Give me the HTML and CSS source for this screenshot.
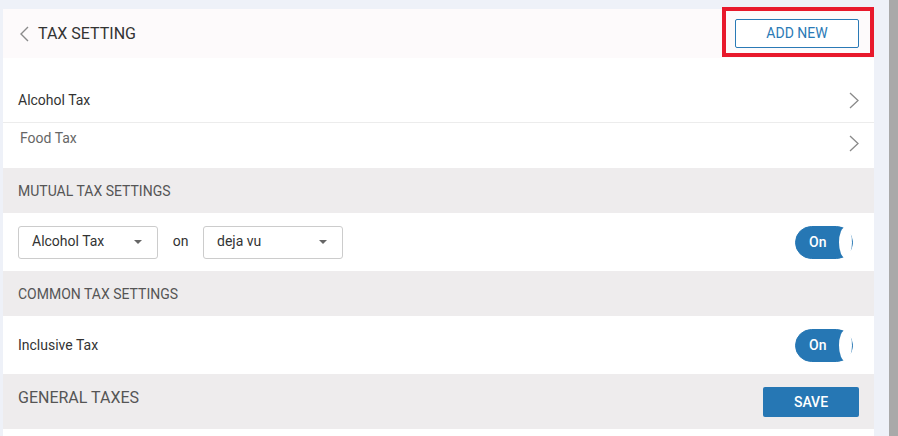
FILE: index.html
```html
<!DOCTYPE html>
<html lang="en">
<head>
    <meta charset="UTF-8">
    <meta name="viewport" content="width=device-width, initial-scale=1.0">
    <title>Tax Setting</title>
    <link rel="stylesheet" href="styles.css">
</head>
<body>
    <div class="screen">
        <div class="panel">
            <div class="header">
                <div class="title">
                    <svg class="back" width="10" height="16" viewBox="0 0 10 16"><path d="M9 1 L2 8 L9 15" fill="none" stroke="#8a8a8a" stroke-width="1.4"/></svg>
                    <span>TAX SETTING</span>
                </div>
                <button class="btn-outline">ADD NEW</button>
                <div class="highlight"></div>
            </div>

            <div class="tax-item first">
                <span>Alcohol Tax</span>
                <svg class="chev" width="10" height="17" viewBox="0 0 10 17"><path d="M1 1 L9 8.5 L1 16" fill="none" stroke="#8a8a8a" stroke-width="1.3"/></svg>
            </div>
            <div class="tax-item second">
                <span class="muted">Food Tax</span>
                <svg class="chev" width="10" height="17" viewBox="0 0 10 17"><path d="M1 1 L9 8.5 L1 16" fill="none" stroke="#8a8a8a" stroke-width="1.3"/></svg>
            </div>

            <div class="section">MUTUAL TAX SETTINGS</div>
            <div class="row">
                <div class="selects">
                    <div class="select"><span>Alcohol Tax</span><i class="caret"></i></div>
                    <span class="on-label">on</span>
                    <div class="select"><span>deja vu</span><i class="caret"></i></div>
                </div>
                <div class="toggle"><span>On</span><i class="knob"></i></div>
            </div>

            <div class="section">COMMON TAX SETTINGS</div>
            <div class="row">
                <span>Inclusive Tax</span>
                <div class="toggle"><span>On</span><i class="knob"></i></div>
            </div>

            <div class="section big">
                <span>GENERAL TAXES</span>
                <button class="btn-solid">SAVE</button>
            </div>
        </div>
        <div class="scrollbar"></div>
    </div>
</body>
</html>
```

FILE: styles.css
```css
body {
    margin: 0;
    background-color: #eef1f8;
    font-family: Roboto, "Liberation Sans", Arial, sans-serif;
    color: #333;
}
.screen {
    display: flex;
    height: 436px;
}
.panel {
    width: 871px;
    margin: 9px 0 0 3px;
    background-color: #fff;
    font-size: 14px;
}
.scrollbar {
    width: 9px;
    margin-left: auto;
    background-color: #a9a9a9;
}
.header {
    position: relative;
    height: 49px;
    display: flex;
    align-items: center;
    justify-content: space-between;
    padding: 0 15px 0 15px;
    background-color: #fdfafb;
}
.title {
    display: flex;
    align-items: center;
    gap: 9px;
    font-size: 16px;
    color: #333;
}
.back {
    margin-left: 1px;
}
.btn-outline {
    width: 124px;
    height: 29px;
    margin-top: -1px;
    background: #fff;
    border: 1px solid #2a7ab6;
    border-radius: 2px;
    color: #2a7ab6;
    font-family: inherit;
    font-size: 14px;
}
.highlight {
    position: absolute;
    right: 0;
    top: -2px;
    width: 144px;
    height: 42px;
    border: 4px solid #e8192c;
}
.tax-item {
    display: flex;
    justify-content: space-between;
    padding: 0 15px 0 15px;
}
.tax-item.first {
    height: 44px;
    padding-top: 20px;
    align-items: center;
    border-bottom: 1px solid #ececec;
}
.tax-item.second {
    height: 45px;
    padding-left: 17px;
}
.tax-item.second span {
    margin-top: 7px;
}
.tax-item.second .chev {
    margin-top: 12px;
}
.muted {
    color: #666;
}
.section {
    height: 45px;
    display: flex;
    align-items: center;
    justify-content: space-between;
    padding: 0 15px;
    background-color: #eeeced;
    color: #555;
}
.section.big {
    height: 55px;
    font-size: 16px;
    align-items: flex-start;
}
.section.big span {
    margin-top: 14px;
}
.btn-solid {
    width: 96px;
    height: 30px;
    margin-top: 13px;
    border: none;
    border-radius: 2px;
    background-color: #2677b4;
    color: #fff;
    font-family: inherit;
    font-size: 14px;
    font-weight: 500;
}
.row {
    height: 58px;
    display: flex;
    align-items: center;
    justify-content: space-between;
    padding: 0 21px 0 15px;
}
.selects {
    display: flex;
    align-items: center;
}
.select {
    width: 140px;
    height: 33px;
    display: flex;
    align-items: center;
    justify-content: space-between;
    padding: 0 15px 0 13px;
    box-sizing: border-box;
    border: 1px solid #ccc;
    border-radius: 3px;
    background: #fff;
}
.select span {
    margin-top: -3px;
}
.caret {
    width: 0;
    height: 0;
    border-left: 4px solid transparent;
    border-right: 4px solid transparent;
    border-top: 4px solid #666;
}
.on-label {
    width: 45px;
    text-align: center;
    margin-top: -3px;
}
.toggle {
    position: relative;
    width: 58px;
    height: 33px;
    box-sizing: border-box;
    border: 1px solid #2677b4;
    border-radius: 17px;
    background-color: #2677b4;
    color: #fff;
    font-weight: 500;
    display: flex;
    align-items: center;
    padding-left: 13px;
}
.knob {
    position: absolute;
    right: 0;
    top: 0;
    width: 13px;
    height: 31px;
    border-radius: 50%;
    background: #fff;
}
```
